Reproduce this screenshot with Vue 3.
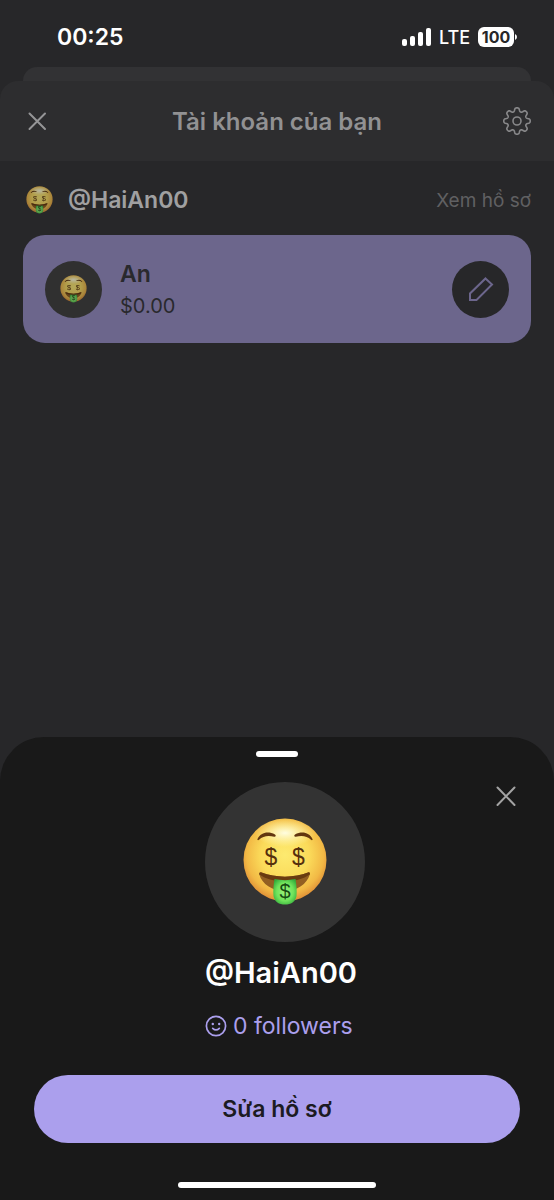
<script setup>
const account = {
  handle: "@HaiAn00",
  name: "An",
  balance: "$0.00",
  followers: 0,
}

const signalBars = [7, 10, 14, 18]

// Outline of the settings cog, eight rounded teeth around the centre
function cogPath(teeth, radius, depth) {
  const points = []
  for (let i = 0; i < 160; i++) {
    const angle = (i / 160) * Math.PI * 2
    const wave = Math.tanh(1.6 * Math.cos(angle * teeth) + 0.2) / Math.tanh(1.8)
    const r = radius + depth * wave
    points.push((r * Math.cos(angle)).toFixed(2) + " " + (r * Math.sin(angle)).toFixed(2))
  }
  return "M" + points.join("L") + "Z"
}

const cog = cogPath(8, 11.4, 1.8)
</script>

<template>
  <div class="screen">
    <svg class="defs" aria-hidden="true">
      <defs>
        <radialGradient id="face" cx="50%" cy="44%" r="58%">
          <stop offset="0" stop-color="#fdea70" />
          <stop offset="0.5" stop-color="#fbdb5a" />
          <stop offset="0.8" stop-color="#f2b945" />
          <stop offset="1" stop-color="#dc8633" />
        </radialGradient>
        <radialGradient id="shine" cx="50%" cy="50%" r="50%">
          <stop offset="0" stop-color="#fffde0" />
          <stop offset="1" stop-color="#fffbc0" stop-opacity="0" />
        </radialGradient>
        <radialGradient id="tongue" cx="50%" cy="50%" r="60%">
          <stop offset="0" stop-color="#9bf57c" />
          <stop offset="0.6" stop-color="#6fe35b" />
          <stop offset="1" stop-color="#32ad3b" />
        </radialGradient>
        <symbol id="money-face" viewBox="0 0 84 88">
          <circle cx="42" cy="42" r="41.5" fill="url(#face)" />
          <ellipse cx="42" cy="15" rx="30" ry="14" fill="url(#shine)" />
          <path d="M14.500 21C17.500 14.500 25 12.800 32 16.500C33.300 17.500 32.700 19 31.300 18.800C25 17.200 20 18 16 21.800C15 22.600 14 22 14.500 21Z" fill="#62360f" />
          <path d="M69.500 21C66.500 14.500 59 12.800 52 16.500C50.700 17.500 51.300 19 52.700 18.800C59 17.200 64 18 68 21.800C69 22.600 70 22 69.500 21Z" fill="#62360f" />
          <path d="M18.500 54.500C32 60 52 60 65 54.500C66.500 54 67.200 55 66.800 56.500C64 66 54 73 42 73C29 73 19 66 16.300 56.500C16 55 17 54 18.500 54.500Z" fill="#935f22" />
          <path d="M18.500 54.500C32 60 52 60 65 54.500C66.500 54 67.200 55 66.800 56.500C60 61 53 63 42 63C30 63 23 61 16.300 56.500C16 55 17 54 18.500 54.500Z" fill="#6a3b10" />
          <path d="M31.500 61C38 62.500 46 62.500 52.500 61C53.500 67 54 73 53.500 78C52.500 84 48 86.500 42 86.500C36 86.500 31.500 84 30.500 78C30 73 30.500 67 31.500 61Z" fill="url(#tongue)" />
          <g class="dollars" fill="#552f0c" text-anchor="middle" font-size="23">
            <text x="28" y="47">$</text>
            <text x="55.500" y="47">$</text>
            <text x="42" y="80" font-size="20" fill="#164b12">$</text>
          </g>
        </symbol>
      </defs>
    </svg>

    <div class="status">
      <span class="clock">00:25</span>
      <div class="indicators">
        <div class="signal">
          <i v-for="bar in signalBars" :key="bar" :style="{ height: bar + 'px' }"></i>
        </div>
        <span class="network">LTE</span>
        <div class="battery">
          <span class="level">100</span>
          <svg width="3" height="8" viewBox="0 0 3 8"><path d="M1 1Q3 2 3 4Q3 6 1 7Z" fill="#fff" /></svg>
        </div>
      </div>
    </div>

    <div class="stacked"></div>

    <header class="header">
      <button class="icon-button" aria-label="Đóng">
        <svg width="30" height="30" viewBox="0 0 30 30" fill="none" stroke="#959597" stroke-width="2" stroke-linecap="round">
          <path d="M7.500 7.500L23 23M23 7.500L7.500 23" />
        </svg>
      </button>
      <h1 class="title">Tài khoản của bạn</h1>
      <button class="icon-button" aria-label="Cài đặt">
        <svg width="30" height="30" viewBox="-15 -15 30 30" fill="none" stroke="#88888a" stroke-width="1.6" stroke-linejoin="round">
          <path :d="cog" />
          <circle r="4" />
        </svg>
      </button>
    </header>

    <main class="content">
      <div class="profile-row">
        <svg class="small-face dimmed" viewBox="0 0 84 88"><use href="#money-face" /></svg>
        <span class="handle">{{ account.handle }}</span>
        <a class="view-link" href="#">Xem hồ sơ</a>
      </div>

      <section class="card">
        <div class="avatar">
          <svg class="small-face dimmed" viewBox="0 0 84 88"><use href="#money-face" /></svg>
        </div>
        <div class="card-text">
          <span class="name">{{ account.name }}</span>
          <span class="balance">{{ account.balance }}</span>
        </div>
        <button class="edit" aria-label="Chỉnh sửa">
          <svg width="28" height="28" viewBox="0 0 28 28" fill="none" stroke="#6c668c" stroke-width="2" stroke-linejoin="miter">
            <path d="M18.500 3.500L25 9.500L9.500 25H3V18.500Z" />
          </svg>
        </button>
      </section>
    </main>

    <section class="sheet">
      <div class="grabber"></div>
      <button class="icon-button close" aria-label="Đóng">
        <svg width="30" height="30" viewBox="0 0 30 30" fill="none" stroke="#a3a3a3" stroke-width="2" stroke-linecap="round">
          <path d="M6.500 6.500L23.500 24M23.500 6.500L6.500 24" />
        </svg>
      </button>
      <div class="identity">
        <div class="big-avatar">
          <svg class="big-face" viewBox="0 0 84 88"><use href="#money-face" /></svg>
        </div>
        <h2 class="big-handle">{{ account.handle }}</h2>
        <a class="followers" href="#">
          <svg width="22" height="22" viewBox="0 0 22 22" fill="none" stroke="#ab9fed" stroke-width="1.7" stroke-linecap="round">
            <circle cx="11" cy="11" r="9.6" />
            <path d="M7.700 13.300Q11 16.500 14.300 13.300" />
            <circle cx="7.800" cy="9" r="1.200" fill="#ab9fed" stroke="none" />
            <circle cx="14.200" cy="9" r="1.200" fill="#ab9fed" stroke="none" />
          </svg>
          <span>{{ account.followers }} followers</span>
        </a>
      </div>
      <button class="primary">Sửa hồ sơ</button>
      <div class="home-bar"></div>
    </section>
  </div>
</template>

<style>
body {
  margin: 0;
  background-color: #272729;
}
</style>

<style scoped>
.screen {
  min-height: 100vh;
  display: flex;
  flex-direction: column;
  background-color: #272729;
  font-family: Inter, "Liberation Sans", sans-serif;
}
button {
  padding: 0;
  border: none;
  background: none;
  font-family: inherit;
  cursor: pointer;
}
a {
  text-decoration: none;
}
h1, h2 {
  margin: 0;
}
svg {
  display: block;
}
.defs {
  position: absolute;
  width: 0;
  height: 0;
}
.dollars {
  font-family: "Liberation Sans", sans-serif;
}
.status {
  height: 67px;
  padding: 7px 37px 0 57px;
  box-sizing: border-box;
  display: flex;
  align-items: center;
  justify-content: space-between;
  color: #fff;
}
.clock {
  font-size: 23px;
  font-weight: 600;
}
.indicators {
  display: flex;
  align-items: center;
  gap: 8px;
}
.signal {
  display: flex;
  align-items: flex-end;
  gap: 3px;
}
.signal i {
  width: 5px;
  border-radius: 2px;
  background-color: #fff;
}
.network {
  font-size: 18px;
  font-weight: 500;
}
.battery {
  display: flex;
  align-items: center;
}
.level {
  width: 36px;
  height: 20px;
  border-radius: 6px;
  background-color: #fff;
  color: #272729;
  font-size: 16px;
  line-height: 20px;
  font-weight: 700;
  text-align: center;
}
.stacked {
  height: 14px;
  margin: 0 23px;
  border-radius: 14px 14px 0 0;
  background-color: #323234;
}
.header {
  height: 80px;
  box-sizing: border-box;
  padding: 0 22px;
  display: flex;
  align-items: center;
  justify-content: space-between;
  border-radius: 18px 18px 0 0;
  background-color: #2d2d2f;
}
.icon-button {
  width: 30px;
  height: 30px;
}
.title {
  font-size: 24px;
  font-weight: 600;
  color: #919193;
}
.content {
  flex: 1;
  padding: 19px 23px;
}
.profile-row {
  height: 40px;
  display: flex;
  align-items: center;
  padding-left: 3px;
}
.small-face {
  width: 27px;
  height: 28px;
}
.dimmed {
  filter: brightness(0.72) saturate(0.9);
}
.handle {
  margin-left: 15px;
  font-size: 23px;
  font-weight: 600;
  color: #a0a0a1;
}
.view-link {
  margin-left: auto;
  font-size: 19px;
  color: #606062;
}
.card {
  height: 108px;
  box-sizing: border-box;
  margin-top: 15px;
  padding: 0 22px;
  display: flex;
  align-items: center;
  border-radius: 22px;
  background-color: #6c668c;
}
.avatar, .edit {
  width: 57px;
  height: 57px;
  display: flex;
  align-items: center;
  justify-content: center;
  border-radius: 50%;
  background-color: #303030;
}
.edit {
  margin-left: auto;
  background-color: #272729;
}
.card-text {
  margin-left: 18px;
  padding-top: 2px;
  display: flex;
  flex-direction: column;
  color: #29292d;
}
.name {
  font-size: 23px;
  line-height: 32px;
  font-weight: 600;
}
.balance {
  font-size: 20px;
  line-height: 32px;
}
.sheet {
  position: relative;
  padding: 14px 34px 12px;
  display: flex;
  flex-direction: column;
  align-items: center;
  border-radius: 44px 44px 0 0;
  background-color: #191919;
}
.grabber {
  width: 42px;
  height: 6px;
  border-radius: 3px;
  background-color: #fff;
}
.close {
  position: absolute;
  top: 44px;
  right: 33px;
}
.identity {
  margin-top: 25px;
  padding-left: 16px;
  display: flex;
  flex-direction: column;
  align-items: flex-start;
}
.big-avatar {
  width: 160px;
  height: 160px;
  display: flex;
  align-items: center;
  justify-content: center;
  border-radius: 50%;
  background-color: #333;
}
.big-face {
  width: 84px;
  height: 88px;
}
.big-handle {
  margin-top: 12px;
  font-size: 29px;
  line-height: 38px;
  font-weight: 600;
  color: #fff;
}
.followers {
  margin-top: 18px;
  display: flex;
  align-items: center;
  gap: 6px;
  font-size: 23px;
  line-height: 32px;
  color: #ab9fed;
}
.primary {
  width: 100%;
  height: 68px;
  margin-top: 33px;
  border-radius: 34px;
  background-color: #ab9fed;
  color: #1c1b22;
  font-size: 23px;
  font-weight: 600;
}
.home-bar {
  width: 198px;
  height: 6px;
  margin-top: 39px;
  border-radius: 3px;
  background-color: #fff;
}
</style>
